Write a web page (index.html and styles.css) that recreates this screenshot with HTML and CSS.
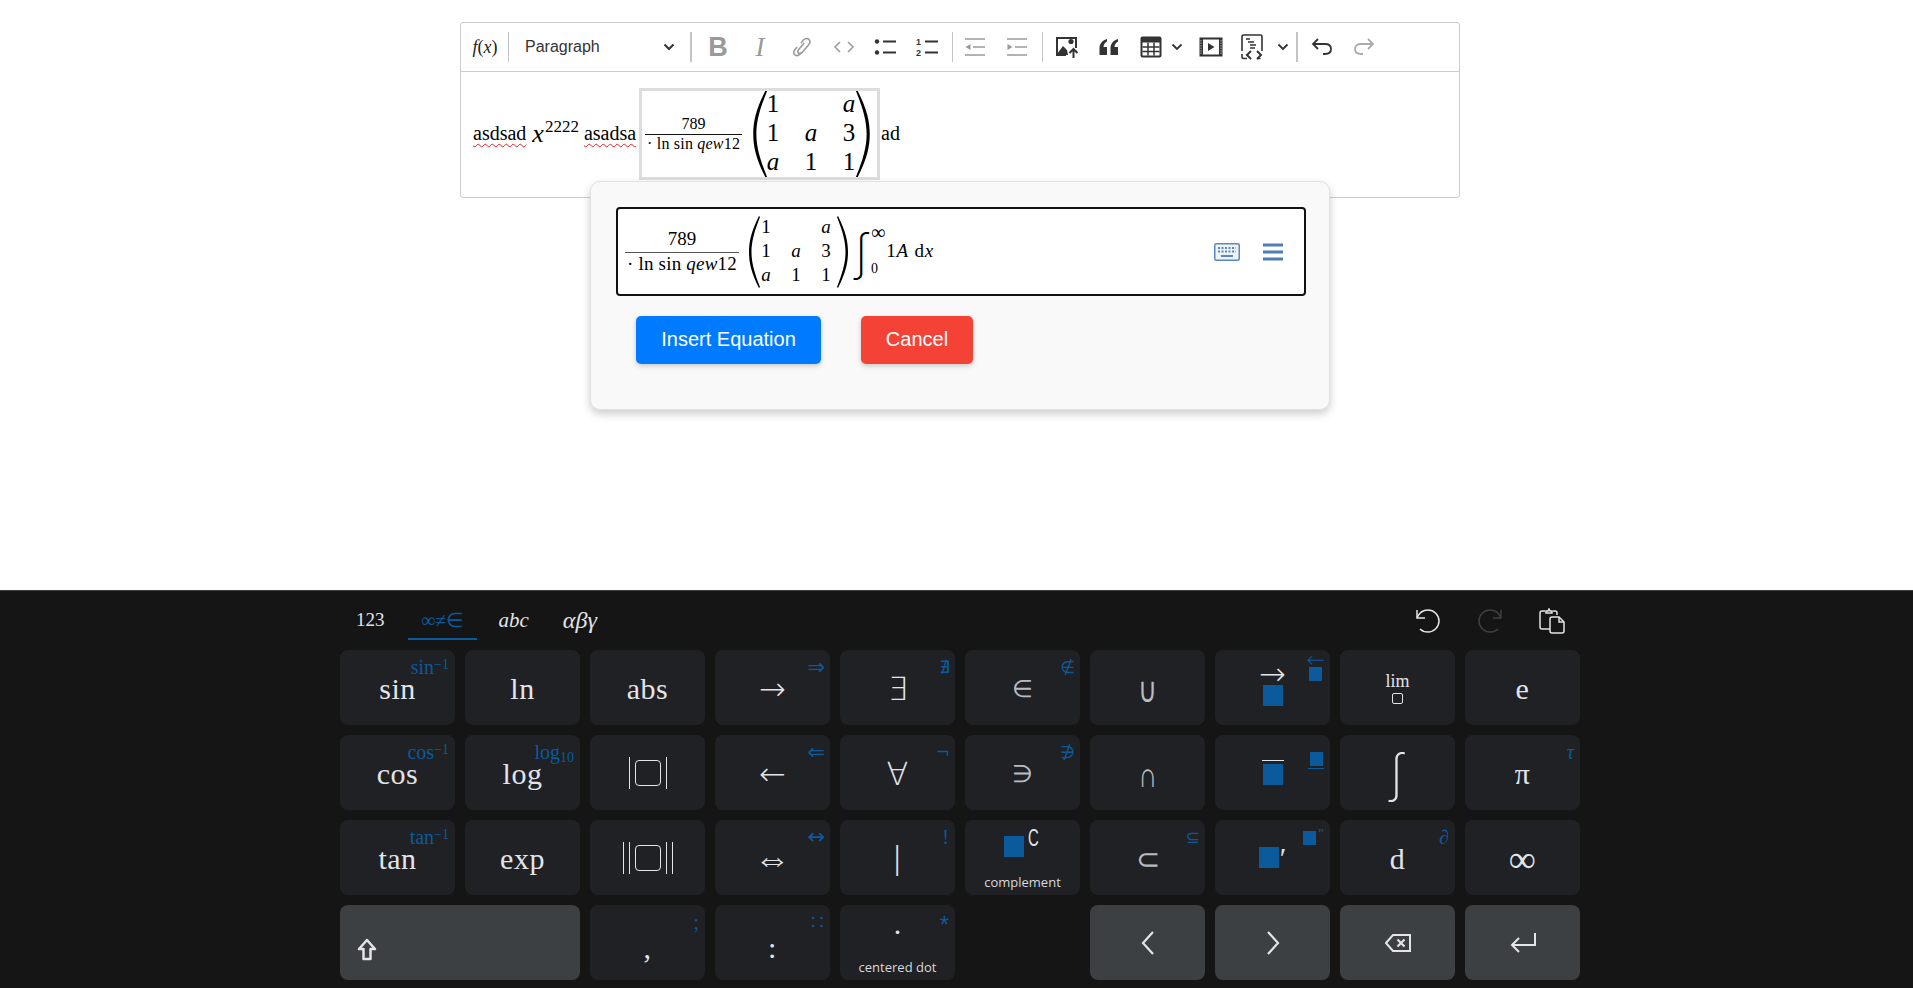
FILE: index.html
```html
<!DOCTYPE html>
<html lang="en">

<head>
  <meta charset="UTF-8">
  <meta name="viewport" content="width=device-width, initial-scale=1.0">
  <title>Equation Editor</title>
  <link rel="stylesheet" href="styles.css">
</head>

<body>
  <div class="page">

    <div class="editor">
      <div class="toolbar">
        <button class="tb-btn fx"><i>f</i>(<i>x</i>)</button>
        <span class="tb-sep"></span>
        <div class="tb-select">
          <span>Paragraph</span>
          <svg width="12" height="8" viewBox="0 0 12 8"><path d="M1.500 1.500 6 6l4.500-4.500" fill="none" stroke="#333" stroke-width="2"/></svg>
        </div>
        <span class="tb-sep tb-sep-right"></span>

        <button class="tb-btn off tb-bold">B</button>
        <button class="tb-btn off tb-italic">I</button>
        <button class="tb-btn off">
          <svg width="22" height="22" viewBox="0 0 20 20" fill="none" stroke="#999" stroke-width="1.400"><path d="M9 6.500 11.500 3.500c1.500-1.700 3.700-1.500 4.800-.4 1.100 1.200 1.200 3.200-.2 4.800l-6 7c-1.100 1.200-2.500 1.200-3.300.5-.8-.8-.8-2 .2-3.200l5-5.800"/><path d="M5.500 10 3.700 12.200c-1.500 1.800-1.300 3.800-.1 4.900 1.200 1 3 .9 4.400-.6l1-1.100"/></svg>
        </button>
        <button class="tb-btn off">
          <svg width="22" height="14" viewBox="0 0 22 14" fill="none" stroke="#999" stroke-width="1.500"><path d="M7 2 2 7l5 5M15 2l5 5-5 5"/></svg>
        </button>
        <button class="tb-btn">
          <svg width="24" height="18" viewBox="0 0 24 18"><circle cx="3" cy="3.500" r="2.200" fill="#333"/><circle cx="3" cy="14.500" r="2.200" fill="#333"/><path d="M9 3.500h13M9 14.500h13" stroke="#333" stroke-width="2"/></svg>
        </button>
        <button class="tb-btn">
          <svg width="24" height="20" viewBox="0 0 24 20"><text x="0" y="8" class="num-mark">1</text><text x="0" y="19" class="num-mark">2</text><path d="M9 4.500h13M9 15.500h13" stroke="#333" stroke-width="2"/></svg>
        </button>
        <span class="tb-sep tb-sep-tight"></span>

        <button class="tb-btn">
          <svg width="22" height="20" viewBox="0 0 22 20" stroke="#999" stroke-width="1.500"><path d="M1 2h20M9 10h12M1 18h20" fill="none"/><path d="M6.500 7v6L1.500 10z" fill="#999" stroke="none"/></svg>
        </button>
        <button class="tb-btn">
          <svg width="22" height="20" viewBox="0 0 22 20" stroke="#999" stroke-width="1.500"><path d="M1 2h20M9 10h12M1 18h20" fill="none"/><path d="M1.500 7v6l5-3z" fill="#999" stroke="none"/></svg>
        </button>
        <span class="tb-sep tb-sep-wide"></span>

        <button class="tb-btn">
          <svg width="24" height="24" viewBox="0 0 24 24"><path d="M1 2h21v11h-2V4H3v15h8v2H1z" fill="#333"/><circle cx="16" cy="6.500" r="2.600" fill="#333"/><path d="M2 19l6-8 4 4 1 5H2z" fill="#333"/><path d="M18.500 23v-8.500M14.500 18l4-4 4 4" fill="none" stroke="#333" stroke-width="2"/></svg>
        </button>
        <button class="tb-btn">
          <svg width="20" height="16" viewBox="0 0 20 16" fill="#333"><path d="M8 0C4 1 .5 4.500.5 9v7H8V8H4.500C4.500 5.500 6 3.500 8 2.500z"/><path d="M19 0c-4 1-7.500 4.500-7.500 9v7H19V8h-3.500c0-2.500 1.500-4.500 3.500-5.500z"/></svg>
        </button>
        <button class="tb-btn tb-split tb-table">
          <svg width="22" height="22" viewBox="0 0 22 22"><rect x="0.500" y="0.500" width="21" height="21" rx="2" fill="#333"/><path d="M2.500 6.500h17v13h-17z" fill="#fff"/><path d="M2.500 11h17M2.500 15.500h17M8 6.500v13M14 6.500v13" stroke="#333" stroke-width="1.500"/></svg>
        </button>
        <button class="tb-chev">
          <svg width="12" height="8" viewBox="0 0 12 8"><path d="M1.500 1.500 6 6l4.500-4.500" fill="none" stroke="#333" stroke-width="1.800"/></svg>
        </button>
        <button class="tb-btn tb-media">
          <svg width="24" height="20" viewBox="0 0 24 20"><rect x="0.500" y="0.500" width="23" height="19" fill="#333"/><path d="M4 2.500h16v15H4z" fill="#fff"/><path d="M9 6v8l6.500-4z" fill="#333"/><path d="M2 3v14" stroke="#888" stroke-width="1.500" stroke-dasharray="1.500 1"/><path d="M22 3v14" stroke="#888" stroke-width="1.500" stroke-dasharray="1.500 1"/></svg>
        </button>
        <button class="tb-btn tb-split">
          <svg width="26" height="26" viewBox="0 0 26 26" fill="none" stroke="#333"><path d="M3 17V2.500C3 1.700 3.500 1 4.500 1h17c.8 0 1.500.7 1.500 1.500V17" stroke-width="1.600"/><path d="M3 20v3c0 1 .7 1.500 1.500 1.500H8M18 24.500h3.500" stroke-width="1.600"/><path d="M7 5h4M9 8h6M11 11h6M11 14h5" stroke-width="1.300"/><path d="M12 17l-4 4 4 4M18 17l4 4-4 4" stroke-width="2"/></svg>
        </button>
        <button class="tb-chev tb-chev-last">
          <svg width="12" height="8" viewBox="0 0 12 8"><path d="M1.500 1.500 6 6l4.500-4.500" fill="none" stroke="#333" stroke-width="1.800"/></svg>
        </button>
        <span class="tb-sep tb-sep-right"></span>

        <button class="tb-btn">
          <svg width="22" height="18" viewBox="0 0 22 18" fill="none" stroke="#333" stroke-width="1.800"><path d="M7 1 2 6l5 5"/><path d="M2 6h12c3.500 0 6 1.800 6 5s-2.500 5-6 5h-2"/></svg>
        </button>
        <button class="tb-btn">
          <svg width="22" height="18" viewBox="0 0 22 18" fill="none" stroke="#aaa" stroke-width="1.800"><path d="M15 1l5 5-5 5"/><path d="M20 6H8c-3.500 0-6 1.800-6 5s2.500 5 6 5h2"/></svg>
        </button>
      </div>

      <div class="content">
        <span class="typo">asdsad</span>
        <span class="inline-math"><i>x</i><sup>2222</sup></span>
        <span class="typo">asadsa</span>

        <div class="math-box">
          <span class="frac">
            <span class="frac-num">789</span>
            <span class="frac-den">· ln sin <i>qew</i>12</span>
          </span>
          <span class="matrix">
            <svg class="paren" viewBox="0 0 12 72" preserveAspectRatio="none"><path d="M11 0C3 16 1 26 1 36s2 20 10 36l1-1C6 56 3.500 46 3.500 36S6 16 12 1z"/></svg>
            <span class="matrix-cells">
              <span>1</span><span></span><i>a</i>
              <span>1</span><i>a</i><span>3</span>
              <i>a</i><span>1</span><span>1</span>
            </span>
            <svg class="paren" viewBox="0 0 12 72" preserveAspectRatio="none"><path d="M1 0c8 16 10 26 10 36s-2 20-10 36L0 71c6-15 8.500-25 8.500-35S6 16 0 1z"/></svg>
          </span>
        </div>

        <span class="after-math">ad</span>
      </div>
    </div>

    <div class="popup">
      <div class="field">
        <span class="frac">
          <span class="frac-num">789</span>
          <span class="frac-den">· ln sin <i>qew</i>12</span>
        </span>
        <span class="matrix">
          <svg class="paren" viewBox="0 0 12 72" preserveAspectRatio="none"><path d="M11 0C3 16 1 26 1 36s2 20 10 36l1-1C6 56 3.500 46 3.500 36S6 16 12 1z"/></svg>
          <span class="matrix-cells">
            <span>1</span><span></span><i>a</i>
            <span>1</span><i>a</i><span>3</span>
            <i>a</i><span>1</span><span>1</span>
          </span>
          <svg class="paren" viewBox="0 0 12 72" preserveAspectRatio="none"><path d="M1 0c8 16 10 26 10 36s-2 20-10 36L0 71c6-15 8.500-25 8.500-35S6 16 0 1z"/></svg>
        </span>
        <span class="integral">
          <span class="int-sign">∫</span>
          <span class="int-limits"><span>∞</span><span>0</span></span>
        </span>
        <span class="int-body">1<i>A</i> d<i>x</i></span>

        <span class="field-icons">
          <svg width="26" height="18" viewBox="0 0 26 18" fill="none"><rect x="0.750" y="0.750" width="24.500" height="16.500" rx="1.500" stroke="#5b87bd" stroke-width="1.500" fill="#eef3f9"/><path d="M4 5h18M4 8.500h18" stroke="#5b87bd" stroke-width="2" stroke-dasharray="2 1.500"/><path d="M7 13h12" stroke="#5b87bd" stroke-width="2"/></svg>
          <svg width="20" height="18" viewBox="0 0 20 18"><path d="M0 2h20M0 9h20M0 16h20" stroke="#4f7db5" stroke-width="3"/></svg>
        </span>
      </div>
      <div class="popup-actions">
        <button class="btn btn-insert">Insert Equation</button>
        <button class="btn btn-cancel">Cancel</button>
      </div>
    </div>

    <div class="keyboard">
      <div class="kb-top">
        <div class="kb-tabs">
          <span class="kb-tab tab-num">123</span>
          <span class="kb-tab active">∞≠∈</span>
          <span class="kb-tab tab-abc"><i>abc</i></span>
          <span class="kb-tab tab-greek"><i>αβγ</i></span>
        </div>
        <div class="kb-tools">
          <svg width="26" height="26" viewBox="0 0 26 26" fill="none" stroke="#e3e4e8" stroke-width="1.500"><path d="M2 2v8h8"/><path d="M2 10C4 5 8 2 13 2c6 0 11 5 11 11s-5 11-11 11c-3.500 0-6-1-8-3"/></svg>
          <svg width="26" height="26" viewBox="0 0 26 26" fill="none" stroke="#3d3f42" stroke-width="1.500"><path d="M24 2v8h-8"/><path d="M24 10c-2-5-6-8-11-8C7 2 2 7 2 13s5 11 11 11c3.500 0 6-1 8-3"/></svg>
          <svg width="26" height="26" viewBox="0 0 26 26" fill="none" stroke="#e3e4e8" stroke-width="1.500"><path d="M11 21H3c-1 0-2-.8-2-2V5c0-1 1-2 2-2h3"/><path d="M14 3h2c1 0 2 1 2 2v2"/><path d="M7 5V3h2l1-2 1 2h2v2z"/><path d="M13 9h7l5 5v9c0 1-.8 2-2 2H13c-1 0-2-1-2-2V11c0-1 1-2 2-2z"/><path d="M20 9v5h5"/></svg>
        </div>
      </div>

      <div class="keys">
        <div class="key"><span class="lbl">sin</span><span class="shift">sin<sup>−1</sup></span></div>
        <div class="key"><span class="lbl">ln</span></div>
        <div class="key"><span class="lbl">abs</span></div>
        <div class="key"><span class="lbl sym">→</span><span class="shift shift-sym shift-arrow">⇒</span></div>
        <div class="key"><span class="lbl sym">∃</span><span class="shift shift-sym">∄</span></div>
        <div class="key"><span class="lbl sym sym-thin">∈</span><span class="shift shift-sym">∉</span></div>
        <div class="key"><span class="lbl sym sym-thin sym-tall">∪</span></div>
        <div class="key key-stack key-raised">
          <span class="lbl sym stack-arrow">→</span><span class="blue-box"></span>
          <span class="shift shift-stack"><span class="stack-small">←</span><span class="blue-box small"></span></span>
        </div>
        <div class="key key-stack"><span class="lim">lim</span><span class="hole small"></span></div>
        <div class="key"><span class="lbl">e</span></div>

        <div class="key"><span class="lbl">cos</span><span class="shift">cos<sup>−1</sup></span></div>
        <div class="key"><span class="lbl">log</span><span class="shift">log<sub>10</sub></span></div>
        <div class="key"><span class="bars"><span class="hole"></span></span></div>
        <div class="key"><span class="lbl sym">←</span><span class="shift shift-sym shift-arrow">⇐</span></div>
        <div class="key"><span class="lbl sym">∀</span><span class="shift shift-sym">¬</span></div>
        <div class="key"><span class="lbl sym sym-thin">∋</span><span class="shift shift-sym">∌</span></div>
        <div class="key"><span class="lbl sym sym-thin sym-tall">∩</span></div>
        <div class="key key-stack">
          <span class="over-line"></span><span class="blue-box"></span>
          <span class="shift shift-stack shift-under"><span class="blue-box small"></span><span class="under-line"></span></span>
        </div>
        <div class="key"><span class="lbl int-key">∫</span></div>
        <div class="key"><span class="lbl">π</span><span class="shift"><i>τ</i></span></div>

        <div class="key"><span class="lbl">tan</span><span class="shift">tan<sup>−1</sup></span></div>
        <div class="key"><span class="lbl">exp</span></div>
        <div class="key"><span class="bars"><span class="bars"><span class="hole"></span></span></span></div>
        <div class="key"><span class="lbl sym sym-wide">⇔</span><span class="shift shift-sym shift-arrow">↔</span></div>
        <div class="key"><span class="lbl pipe">|</span><span class="shift">!</span></div>
        <div class="key key-caption">
          <span class="with-mark"><span class="blue-box"></span><span class="mark-c">C</span></span>
          <span class="caption">complement</span>
        </div>
        <div class="key"><span class="lbl sym sym-thin sym-sub">⊂</span><span class="shift shift-sym">⊆</span></div>
        <div class="key">
          <span class="with-prime"><span class="blue-box"></span><span class="mark-prime">′</span></span>
          <span class="shift shift-prime"><span class="blue-box small"></span><span class="dim-prime">″</span></span>
        </div>
        <div class="key"><span class="lbl">d</span><span class="shift"><i>∂</i></span></div>
        <div class="key"><span class="lbl lbl-inf">∞</span></div>

        <div class="key action wide">
          <svg width="20" height="24" viewBox="0 0 20 24" fill="none" stroke="#e3e4e8" stroke-width="2.500" stroke-linejoin="round"><path d="M10 2 2 11h4.500v10h7V11H18z"/></svg>
        </div>
        <div class="key"><span class="lbl mark-low">,</span><span class="shift">;</span></div>
        <div class="key"><span class="lbl mark-low">:</span><span class="shift">∷</span></div>
        <div class="key key-caption"><span class="cdot">·</span><span class="caption">centered dot</span><span class="shift shift-star">*</span></div>
        <div class="key-gap"></div>
        <div class="key action">
          <svg width="16" height="26" viewBox="0 0 16 26" fill="none" stroke="#e3e4e8" stroke-width="2.200"><path d="M13 2 3 13l10 11"/></svg>
        </div>
        <div class="key action">
          <svg width="16" height="26" viewBox="0 0 16 26" fill="none" stroke="#e3e4e8" stroke-width="2.200"><path d="M3 2l10 11L3 24"/></svg>
        </div>
        <div class="key action">
          <svg width="26" height="18" viewBox="0 0 26 18" fill="none" stroke="#e3e4e8" stroke-width="2"><path d="M8 1h17v16H8L1 9z"/><path d="M12.500 5.500l7 7M19.500 5.500l-7 7" stroke-width="2.200"/></svg>
        </div>
        <div class="key action">
          <svg width="26" height="22" viewBox="0 0 26 22" fill="none" stroke="#e3e4e8" stroke-width="2"><path d="M25 1v12H2"/><path d="M9 6l-7 7 7 7"/></svg>
        </div>
      </div>
    </div>

  </div>
</body>

</html>
```

FILE: styles.css
```css
* {
  box-sizing: border-box;
}

html,
body {
  margin: 0;
  height: 100%;
  overflow: hidden;
  background: #fff;
}

body {
  font-family: "Liberation Serif", serif;
  color: #000;
}

button {
  font: inherit;
  background: none;
  border: none;
  padding: 0;
  color: inherit;
}

.page {
  position: relative;
  width: 1920px;
  height: 100vh;
  display: flex;
  flex-direction: column;
}

/* editor */

.editor {
  width: 1000px;
  margin: 22px auto 0;
  border: 1px solid #ccc;
  border-radius: 3px;
}

.toolbar {
  height: 49px;
  border-bottom: 1px solid #ccc;
  display: flex;
  align-items: center;
}

.tb-btn {
  width: 42px;
  height: 36px;
  flex: none;
  display: flex;
  align-items: center;
  justify-content: center;
}

.fx {
  width: 44px;
  padding-left: 4px;
  font-size: 18px;
  color: #222;
}

.tb-bold {
  font-family: "Liberation Sans", sans-serif;
  font-weight: bold;
  font-size: 27px;
  color: #999;
  margin-left: 2px;
}

.tb-italic {
  font-style: italic;
  font-size: 27px;
  color: #999;
}

.off {
  color: #999;
}

.num-mark {
  font-family: "Liberation Sans", sans-serif;
  font-weight: bold;
  font-size: 9px;
  fill: #333;
}

.tb-sep {
  flex: none;
  width: 1px;
  height: 30px;
  margin: 0 3px;
  background: #c4c4c4;
}

.tb-sep-right {
  width: 2px;
  margin: 0 3px 0 0;
}

.tb-sep-tight {
  margin-right: 1px;
}

.tb-sep-wide {
  margin-left: 4px;
}

.tb-select {
  width: 178px;
  flex: none;
  padding: 0 15px 0 13px;
  display: flex;
  align-items: center;
  justify-content: space-between;
  font-family: "Liberation Sans", sans-serif;
  font-size: 16px;
  color: #333;
}

.tb-split {
  width: 41px;
}

.tb-table {
  margin-right: -3px;
}

.tb-media {
  margin-left: 4px;
  margin-right: -1px;
}

.tb-chev {
  width: 18px;
  flex: none;
  display: flex;
  justify-content: center;
}

.tb-chev-last {
  margin: 0 4px 0 2px;
}

.content {
  display: flex;
  align-items: center;
  height: 125px;
  padding: 0 12px 2px;
  font-size: 20px;
}

.typo {
  text-decoration: underline wavy #e8232a 1.2px;
  text-underline-offset: 3px;
}

.inline-math {
  margin: 0 5px 0 6px;
  font-size: 26px;
  line-height: 1;
}

.inline-math sup {
  font-size: 17px;
  vertical-align: 10px;
  line-height: 0;
  margin-left: 1px;
}

.after-math {
  margin-left: 1px;
}

.math-box {
  width: 241px;
  height: 92px;
  margin-left: 3px;
  border: 3px solid #ddd;
  padding: 0 0 0 3px;
  display: flex;
  align-items: center;
  gap: 10px;
  overflow: hidden;
  font-size: 16px;
  line-height: 1.1;
}

.frac {
  display: inline-flex;
  flex-direction: column;
  align-items: center;
  flex: none;
}

.frac-num {
  padding: 0 1px 1px;
}

.frac-den {
  border-top: 1px solid #111;
  padding: 0 2px;
  white-space: nowrap;
  letter-spacing: 0.2px;
}

.matrix {
  display: flex;
  align-items: stretch;
  flex: none;
  height: 88px;
}

.paren {
  width: 15px;
  height: 100%;
  flex: none;
}

.matrix-cells {
  display: grid;
  grid-template-columns: repeat(3, 38px);
  grid-auto-rows: 29px;
  align-items: center;
  justify-items: center;
  font-size: 25px;
  margin: 0 -12px 0 -13px;
}

/* popup over the editor */

.popup {
  position: absolute;
  top: 181px;
  left: 590px;
  width: 740px;
  height: 229px;
  padding: 25px 23px 25px 25px;
  background: #f9f9f9;
  border: 1px solid #e2e2e2;
  border-radius: 10px;
  box-shadow: 0 4px 8px rgba(0, 0, 0, 0.2);
}

.field {
  height: 89px;
  background: #fff;
  border: 2px solid #111;
  border-radius: 4px;
  padding: 0 0 0 7px;
  display: flex;
  align-items: center;
  font-size: 19px;
  line-height: 1.2;
}

.field .frac-den {
  border-top-color: #555;
  letter-spacing: 0.2px;
}

.field .matrix {
  height: 72px;
  margin-left: 9px;
}

.field .paren {
  width: 12px;
}

.field .matrix-cells {
  grid-template-columns: repeat(3, 30px);
  grid-auto-rows: 24px;
  font-size: 19px;
  margin: 0 -4px 0 -9px;
}

.integral {
  display: flex;
  margin-left: 5px;
}

.int-sign {
  font-family: Inter, "DejaVu Sans", sans-serif;
  font-weight: 200;
  font-size: 48px;
  line-height: 56px;
}

.int-limits {
  display: flex;
  flex-direction: column;
  justify-content: space-between;
  height: 54px;
  font-size: 14px;
  margin-left: 1px;
}

.int-limits span:first-child {
  font-size: 20px;
  line-height: 16px;
}

.int-body {
  margin-left: 1px;
  letter-spacing: 0.8px;
}

.field-icons {
  margin-left: auto;
  margin-right: 21px;
  display: flex;
  align-items: center;
  gap: 23px;
}

.popup-actions {
  display: flex;
  gap: 40px;
  margin: 20px 0 0 20px;
}

.btn {
  height: 48px;
  padding-bottom: 2px;
  border-radius: 5px;
  color: #fff;
  font-family: "Liberation Sans", sans-serif;
  font-size: 20px;
  box-shadow: 0 2px 5px rgba(0, 0, 0, 0.2);
}

.btn-insert {
  width: 185px;
  background: #007bff;
}

.btn-cancel {
  width: 112px;
  background: #f44336;
}

/* virtual keyboard */

.keyboard {
  margin-top: auto;
  height: 398px;
  background: #151515;
  border-top: 1px solid #3a3a3a;
  padding: 0 340px;
  color: #e3e4e8;
}

.kb-top {
  height: 59px;
  display: flex;
  align-items: flex-start;
  justify-content: space-between;
}

.kb-tabs {
  display: flex;
  padding-top: 12px;
}

.kb-tab {
  height: 37px;
  padding-top: 5px;
  font-size: 21px;
  line-height: 24px;
}

.tab-num {
  margin: 0 23px 0 16px;
  font-size: 19px;
}

.kb-tab.active {
  width: 69px;
  text-align: center;
  font-size: 20px;
  color: #0b5a9c;
  border-bottom: 2px solid #0b5a9c;
  white-space: nowrap;
  margin-right: 22px;
}

.tab-abc {
  margin-right: 34px;
}

.tab-greek {
  font-size: 24px;
}

.kb-tools {
  display: flex;
  gap: 36px;
  padding: 17px 15px 0 0;
}

.keys {
  display: grid;
  grid-template-columns: repeat(10, 115px);
  grid-auto-rows: 75px;
  gap: 10px;
}

.key {
  position: relative;
  background: #1f2124;
  border-radius: 8px;
  display: flex;
  align-items: center;
  justify-content: center;
}

.key.action {
  background: #3c4043;
}

.key.wide {
  grid-column: span 2;
  justify-content: flex-start;
  padding: 14px 0 0 17px;
}

.key-stack {
  flex-direction: column;
}

.key-raised {
  padding-bottom: 6px;
}

.key-caption {
  flex-direction: column;
  justify-content: flex-start;
}

.lbl {
  font-size: 30px;
  line-height: 20px;
  padding-top: 3px;
  letter-spacing: 0.5px;
}

.sym {
  font-family: "DejaVu Sans", sans-serif;
  font-weight: 200;
  font-size: 32px;
  letter-spacing: 0;
}

.sym-thin {
  font-size: 24px;
  color: #b9babd;
}

.sym-tall {
  display: inline-block;
  font-size: 26px;
  transform: scaleY(1.35);
}

.sym-sub {
  font-size: 29px;
}

.sym-wide {
  font-size: 36px;
}

.shift {
  position: absolute;
  top: 10px;
  right: 6px;
  font-size: 20px;
  line-height: 14px;
  color: #0b5a9c;
}

.shift-sym {
  font-family: "DejaVu Sans", sans-serif;
  font-size: 17px;
  right: 5px;
}

.shift-arrow {
  font-size: 21px;
}

.shift-star {
  top: 13px;
  font-size: 24px;
  font-family: "Liberation Sans", sans-serif;
}

.shift sup {
  font-size: 14px;
  vertical-align: 5px;
  line-height: 0;
}

.shift sub {
  font-size: 14px;
  vertical-align: -3px;
  line-height: 0;
}

.blue-box {
  display: inline-block;
  width: 20px;
  height: 21px;
  background: #0b5a9c;
  flex: none;
}

.blue-box.small {
  width: 13px;
  height: 14px;
}

.stack-arrow {
  line-height: 22px;
  padding-top: 0;
  margin-bottom: 0;
}

.shift-stack {
  display: flex;
  flex-direction: column;
  align-items: center;
  top: 3px;
  right: 5px;
}

.shift-under {
  top: 17px;
  right: 6px;
}

.stack-small {
  font-family: "DejaVu Sans", sans-serif;
  font-weight: 200;
  line-height: 14px;
  font-size: 22px;
}

.over-line {
  width: 22px;
  height: 1px;
  background: #e3e4e8;
  margin-bottom: 3px;
}

.under-line {
  width: 16px;
  height: 1px;
  background: #0b5a9c;
  margin-top: 2px;
}

.lim {
  font-size: 18px;
  line-height: 18px;
}

.hole {
  display: inline-block;
  width: 26px;
  height: 26px;
  border: 1.5px solid #e3e4e8;
  border-radius: 4px;
}

.hole.small {
  width: 11px;
  height: 11px;
  border-width: 1px;
  border-radius: 2px;
  margin-top: 3px;
}

.bars {
  display: inline-flex;
  align-items: center;
  height: 32px;
  padding: 0 5px;
  border-left: 1px solid #e3e4e8;
  border-right: 1px solid #e3e4e8;
}

.int-key {
  font-family: Inter, "DejaVu Sans", sans-serif;
  font-weight: 200;
  font-size: 50px;
  line-height: 60px;
  padding-top: 0;
}

.pipe {
  font-size: 34px;
  line-height: 36px;
  padding-top: 0;
}

.lbl-inf {
  font-size: 38px;
}

.with-mark {
  display: flex;
  align-items: flex-start;
  margin-top: 8px;
  height: 34px;
}

.with-mark .blue-box {
  margin-top: 8px;
}

.mark-c {
  font-family: "Liberation Sans", sans-serif;
  font-size: 23px;
  line-height: 20px;
  margin-left: 1px;
  transform: scaleX(0.65);
}

.caption {
  position: absolute;
  left: 0;
  right: 0;
  bottom: 4px;
  text-align: center;
  font-family: "Open Sans", sans-serif;
  font-size: 13px;
  line-height: 18px;
  color: #d8d9dc;
}

.with-prime {
  display: flex;
  align-items: flex-start;
}

.mark-prime {
  font-size: 30px;
  line-height: 22px;
  margin-left: 1px;
}

.shift-prime {
  display: flex;
  top: 11px;
  right: 6px;
}

.dim-prime {
  font-size: 14px;
  line-height: 8px;
  margin-left: 2px;
  color: #2a5a85;
}

.mark-low {
  padding-top: 10px;
}

.cdot {
  margin-top: 12px;
  font-size: 30px;
  line-height: 29px;
}

.key-gap {
  background: none;
}
```
